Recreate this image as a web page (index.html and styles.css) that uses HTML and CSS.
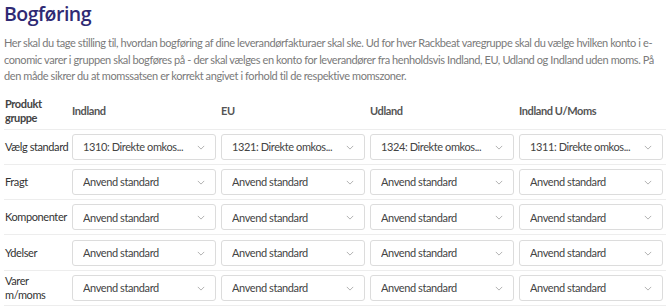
FILE: index.html
```html
<!DOCTYPE html>
<html lang="da">
<head>
  <meta charset="UTF-8" />
  <meta name="viewport" content="width=device-width, initial-scale=1.0" />
  <title>Bogføring</title>
  <link rel="stylesheet" href="styles.css">
</head>
<body>
  <div class="page">
    <h1>Bogføring</h1>
    <p class="intro">Her skal du tage stilling til, hvordan bogføring af dine leverandørfakturaer skal ske. Ud for hver Rackbeat varegruppe skal du vælge hvilken konto i e-conomic varer i gruppen skal bogføres på - der skal vælges en konto for leverandører fra henholdsvis Indland, EU, Udland og Indland uden moms. På den måde sikrer du at momssatsen er korrekt angivet i forhold til de respektive momszoner.</p>

    <div class="accounts">
      <div class="row head">
        <div class="group">Produkt gruppe</div>
        <div>Indland</div>
        <div>EU</div>
        <div>Udland</div>
        <div>Indland U/Moms</div>
      </div>

      <div class="row">
        <div class="group">Vælg standard</div>
        <div class="field"><select><option>1310: Direkte omkos...</option></select><svg viewBox="0 0 10 6"><path d="M1 1l4 4 4-4"/></svg></div>
        <div class="field"><select><option>1321: Direkte omkos...</option></select><svg viewBox="0 0 10 6"><path d="M1 1l4 4 4-4"/></svg></div>
        <div class="field"><select><option>1324: Direkte omkos...</option></select><svg viewBox="0 0 10 6"><path d="M1 1l4 4 4-4"/></svg></div>
        <div class="field"><select><option>1311: Direkte omkos...</option></select><svg viewBox="0 0 10 6"><path d="M1 1l4 4 4-4"/></svg></div>
      </div>

      <div class="row">
        <div class="group">Fragt</div>
        <div class="field"><select><option>Anvend standard</option></select><svg viewBox="0 0 10 6"><path d="M1 1l4 4 4-4"/></svg></div>
        <div class="field"><select><option>Anvend standard</option></select><svg viewBox="0 0 10 6"><path d="M1 1l4 4 4-4"/></svg></div>
        <div class="field"><select><option>Anvend standard</option></select><svg viewBox="0 0 10 6"><path d="M1 1l4 4 4-4"/></svg></div>
        <div class="field"><select><option>Anvend standard</option></select><svg viewBox="0 0 10 6"><path d="M1 1l4 4 4-4"/></svg></div>
      </div>

      <div class="row">
        <div class="group">Komponenter</div>
        <div class="field"><select><option>Anvend standard</option></select><svg viewBox="0 0 10 6"><path d="M1 1l4 4 4-4"/></svg></div>
        <div class="field"><select><option>Anvend standard</option></select><svg viewBox="0 0 10 6"><path d="M1 1l4 4 4-4"/></svg></div>
        <div class="field"><select><option>Anvend standard</option></select><svg viewBox="0 0 10 6"><path d="M1 1l4 4 4-4"/></svg></div>
        <div class="field"><select><option>Anvend standard</option></select><svg viewBox="0 0 10 6"><path d="M1 1l4 4 4-4"/></svg></div>
      </div>

      <div class="row">
        <div class="group">Ydelser</div>
        <div class="field"><select><option>Anvend standard</option></select><svg viewBox="0 0 10 6"><path d="M1 1l4 4 4-4"/></svg></div>
        <div class="field"><select><option>Anvend standard</option></select><svg viewBox="0 0 10 6"><path d="M1 1l4 4 4-4"/></svg></div>
        <div class="field"><select><option>Anvend standard</option></select><svg viewBox="0 0 10 6"><path d="M1 1l4 4 4-4"/></svg></div>
        <div class="field"><select><option>Anvend standard</option></select><svg viewBox="0 0 10 6"><path d="M1 1l4 4 4-4"/></svg></div>
      </div>

      <div class="row">
        <div class="group">Varer m/moms</div>
        <div class="field"><select><option>Anvend standard</option></select><svg viewBox="0 0 10 6"><path d="M1 1l4 4 4-4"/></svg></div>
        <div class="field"><select><option>Anvend standard</option></select><svg viewBox="0 0 10 6"><path d="M1 1l4 4 4-4"/></svg></div>
        <div class="field"><select><option>Anvend standard</option></select><svg viewBox="0 0 10 6"><path d="M1 1l4 4 4-4"/></svg></div>
        <div class="field"><select><option>Anvend standard</option></select><svg viewBox="0 0 10 6"><path d="M1 1l4 4 4-4"/></svg></div>
      </div>
    </div>
  </div>
</body>
</html>
```

FILE: styles.css
```css
* {
  box-sizing: border-box;
}
body {
  margin: 0;
  background: #fff;
  font-family: 'Lato', sans-serif;
  font-size: 11px;
  letter-spacing: -0.4px;
  color: #333;
}
.page {
  padding: 0 4px;
}
h1 {
  margin: 0;
  padding-top: 1px;
  font-family: 'Open Sans', sans-serif;
  font-size: 19.5px;
  font-weight: 600;
  letter-spacing: -0.5px;
  line-height: 26px;
  color: #2f2a74;
}
.intro {
  margin: 8px 0 0;
  line-height: 16.5px;
  color: #7a7a7a;
}
.accounts {
  margin-top: 11px;
}
.row {
  display: grid;
  grid-template-columns: 63px repeat(4, 144px);
  column-gap: 5px;
  align-items: center;
  height: 35.3px;
  border-bottom: 1px solid #ededed;
}
.row.head {
  height: 34px;
  padding-bottom: 3px;
  font-weight: 700;
  color: #555;
  line-height: 14px;
}
.row.head .group {
  color: #444;
}
.group {
  line-height: 14px;
  color: #333;
  padding-left: 1px;
  white-space: nowrap;
}
.row.head .group,
.row:last-child .group {
  white-space: normal;
  width: 50px;
}
.field {
  position: relative;
}
.field select {
  display: block;
  width: 100%;
  height: 26px;
  padding: 0 24px 0 10px;
  border: 1px solid #dcdcdc;
  border-radius: 3px;
  background: #fff;
  font-family: 'Lato', sans-serif;
  font-size: 11px;
  letter-spacing: -0.4px;
  color: #444;
  appearance: none;
  -webkit-appearance: none;
}
.field svg {
  position: absolute;
  right: 11px;
  top: 11px;
  width: 8px;
  height: 5px;
  fill: none;
  stroke: #b0b0b0;
  stroke-width: 1.2;
}
```
